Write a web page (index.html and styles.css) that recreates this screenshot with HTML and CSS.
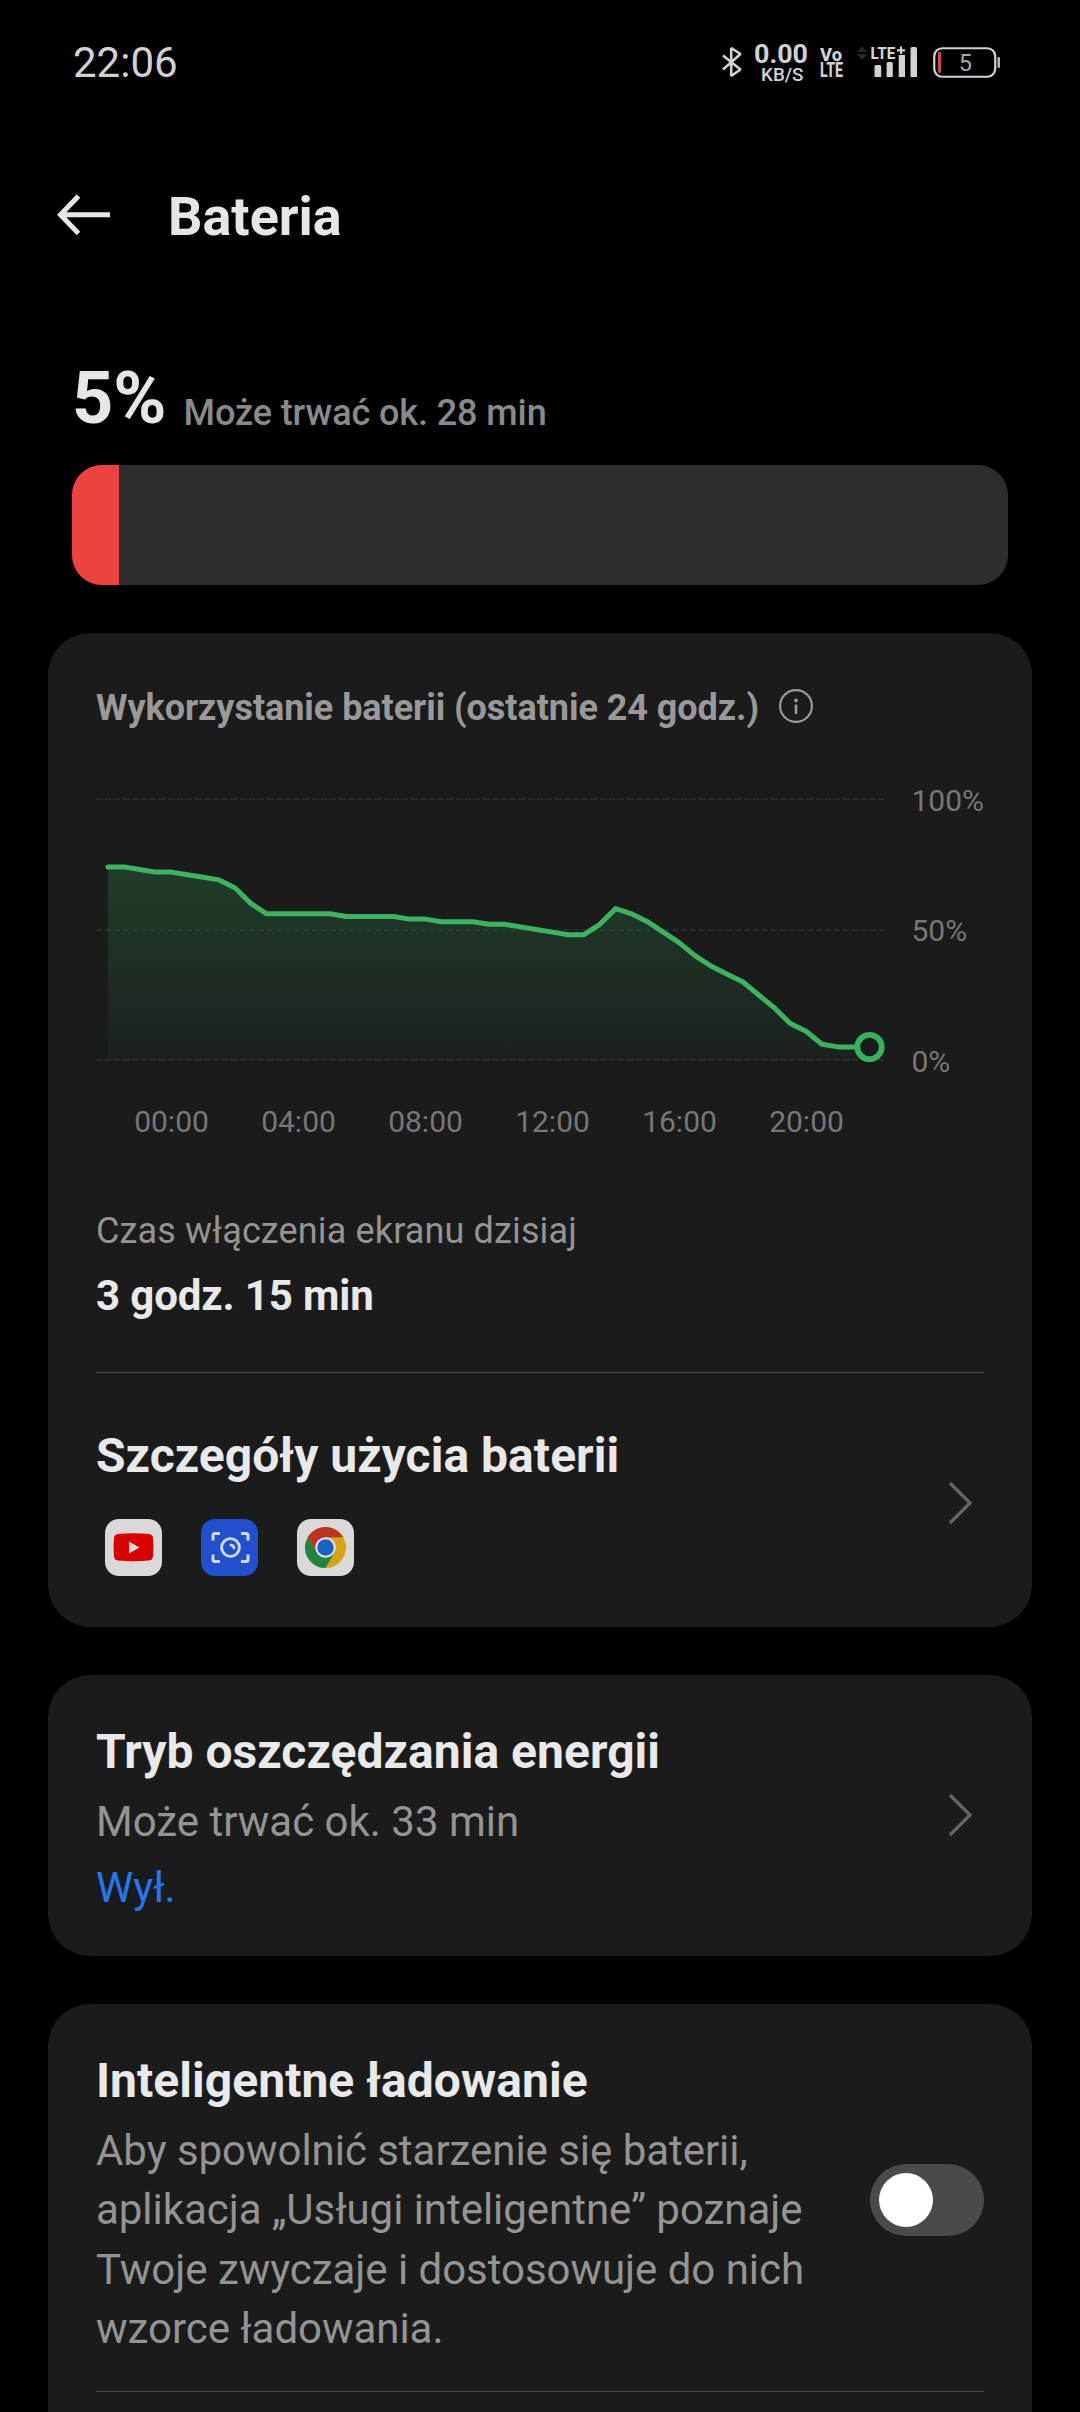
FILE: index.html
```html
<!DOCTYPE html>
<html lang="pl">
<head>
<meta charset="utf-8">
<title>Bateria</title>
<link rel="stylesheet" href="styles.css">
</head>
<body>
<div class="screen">
  <div class="status-bar">
    <span class="clock">22:06</span>
    <svg class="status-icons" width="284" height="50" viewBox="720 38 284 50">
      <path d="M723 55.500L740.500 69.500L731.200 76V48L740.500 54L723 69.500" fill="none" stroke="#d2d2d2" stroke-width="2.600" stroke-linejoin="bevel"/>
      <g fill="#d2d2d2" font-weight="700">
        <text x="754" y="63.300" font-size="25.500" textLength="54" lengthAdjust="spacingAndGlyphs">0.00</text>
        <text x="761" y="80.500" font-size="18.500" font-weight="500" textLength="42.500" lengthAdjust="spacingAndGlyphs">KB/S</text>
        <text x="820" y="61" font-size="19" font-weight="800" textLength="22" lengthAdjust="spacingAndGlyphs">Vo</text>
        <text x="820" y="76.700" font-size="20" font-weight="800" textLength="23" lengthAdjust="spacingAndGlyphs">LTE</text>
        <text x="870.500" y="58.500" font-size="16" font-weight="800" textLength="25" lengthAdjust="spacingAndGlyphs">LTE</text>
      </g>
      <path d="M857 52l5-6 5 6zM857 54l5 6 5-6z" fill="#292929"/>
      <path d="M897 50.300h8M901 46.500v7.600" stroke="#d2d2d2" stroke-width="2.200"/>
      <path d="M874.500 77v-10.500q0-1.500 1.500-1.500h3.700q1.500 0 1.500 1.500v10.500zM886.600 77v-13.500q0-1.500 1.500-1.500h3.200q1.500 0 1.500 1.500v13.500zM898.700 77v-22h6.300v22zM910.500 77v-28.500q0-1.500 1.500-1.500h3.500q1.500 0 1.500 1.500v28.500z" fill="#d2d2d2"/>
      <rect x="934.250" y="48.250" width="61" height="28.500" rx="8" fill="none" stroke="#d2d2d2" stroke-width="2.200"/>
      <rect x="997.500" y="57" width="2.500" height="11" rx="1.200" fill="#b8b8b8"/>
      <rect x="938" y="52" width="3" height="21" rx="1.200" fill="#d5434b"/>
      <text x="958.700" y="71" font-size="23.500" fill="#a8a8a8">5</text>
    </svg>
  </div>

  <div class="header">
    <svg class="back" width="54" height="44" viewBox="0 0 54 44" fill="none" stroke="#e6e6e6" stroke-width="5">
      <path d="M21.500 3L3.500 21.800L21.500 40.600M3.500 21.800H53"/>
    </svg>
    <h1 class="title">Bateria</h1>
  </div>

  <div class="summary">
    <span class="percent">5%</span>
    <span class="remaining">Może trwać ok. 28 min</span>
  </div>
  <div class="meter"><div class="meter-fill" style="width:5%"></div></div>

  <div class="card usage">
    <div class="usage-head">
      <h2 class="usage-title">Wykorzystanie baterii (ostatnie 24 godz.)</h2>
      <svg class="info" width="34" height="34" viewBox="0 0 34 34">
        <circle cx="17" cy="17" r="15.900" fill="none" stroke="#999" stroke-width="2.200"/>
        <circle cx="17" cy="11.500" r="2" fill="#999"/>
        <rect x="15.700" y="15.500" width="2.600" height="9.500" fill="#999"/>
      </svg>
    </div>
    <svg class="chart" width="888" height="370" viewBox="0 0 888 370">
      <defs>
        <linearGradient id="area" x1="0" y1="88" x2="0" y2="281" gradientUnits="userSpaceOnUse">
          <stop offset="0" stop-color="#34b35c" stop-opacity=".22"/>
          <stop offset="1" stop-color="#34b35c" stop-opacity=".04"/>
        </linearGradient>
      </defs>
      <g id="grid" stroke="#2a2a2a" stroke-width="2" stroke-dasharray="6 3">
        <path d="M0 20H788M0 151H788M0 281H788"/>
      </g>
      <path id="fill" fill="url(#area)"/>
      <path id="line" fill="none" stroke="#3bb45f" stroke-width="5" stroke-linejoin="round" stroke-linecap="round"/>
      <circle cx="773.500" cy="268" r="12.200" fill="#1b1b1b" stroke="#34b35c" stroke-width="5.800"/>
      <g class="axis">
        <text x="815.500" y="32">100%</text>
        <text x="815.500" y="162">50%</text>
        <text x="815.500" y="293">0%</text>
      </g>
      <g class="axis hours">
        <text x="75.500" y="352.500">00:00</text>
        <text x="202.500" y="352.500">04:00</text>
        <text x="329.500" y="352.500">08:00</text>
        <text x="456.500" y="352.500">12:00</text>
        <text x="583.500" y="352.500">16:00</text>
        <text x="710.500" y="352.500">20:00</text>
      </g>
    </svg>
    <p class="screen-label">Czas włączenia ekranu dzisiaj</p>
    <p class="screen-time">3 godz. 15 min</p>
    <div class="divider"></div>
    <div class="row details">
      <div>
        <h2 class="heading">Szczegóły użycia baterii</h2>
        <div class="apps">
          <svg width="57" height="57" viewBox="0 0 57 57">
            <rect width="57" height="57" rx="14" fill="#d9d9d9"/>
            <path d="M13 15Q28.500 13.500 44 15Q47.500 15.500 48 19Q49 28 48 37.500Q47.500 41 44 41.500Q28.500 43 13 41.500Q9.500 41 9 37.500Q8 28 9 19Q9.500 15.500 13 15Z" fill="#d90000"/>
            <path d="M24 22.500V34.500L34.500 28.500Z" fill="#e4dada"/>
          </svg>
          <svg width="57" height="57" viewBox="0 0 57 57">
            <rect width="57" height="57" rx="14" fill="#2150cf"/>
            <path d="M12 21.500V16.500Q12 14.500 14 14.500H19M40 14.500H45Q47 14.500 47 16.500V21.500M47 35.500V40.500Q47 42.500 45 42.500H40M19 42.500H14Q12 42.500 12 40.500V35.500" fill="none" stroke="#d3dcf6" stroke-width="3"/>
            <circle cx="29.500" cy="28.500" r="8.900" fill="none" stroke="#d3dcf6" stroke-width="2.800"/>
            <path d="M30 26Q32.500 26.500 33 29" fill="none" stroke="#d3dcf6" stroke-width="2.800" stroke-linecap="round"/>
          </svg>
          <svg width="57" height="57" viewBox="0 0 57 57">
            <rect width="57" height="57" rx="14" fill="#d9d9d9"/>
            <circle cx="28.500" cy="28.500" r="20.500" fill="#d7a414"/>
            <path d="M28.500 28.500V18.200H46.200A20.500 20.500 0 0 0 10.800 18.200L19.600 33.600Z" fill="#bf3025"/>
            <path d="M10.800 18.200A20.500 20.500 0 0 0 28.500 49L37.400 33.600L28.500 28.500L19.600 33.600Z" fill="#20853a"/>
            <circle cx="28.500" cy="28.500" r="10.300" fill="#dfe3e8"/>
            <circle cx="28.500" cy="28.500" r="8.200" fill="#1761c8"/>
          </svg>
        </div>
      </div>
      <svg class="chevron" width="26" height="44" viewBox="0 0 26 44"><path d="M2 2L22 22L2 42" fill="none" stroke="#636363" stroke-width="3.400"/></svg>
    </div>
  </div>

  <div class="card row saver">
    <div>
      <h2 class="heading">Tryb oszczędzania energii</h2>
      <p class="saver-text">Może trwać ok. 33 min</p>
      <p class="saver-state">Wył.</p>
    </div>
    <svg class="chevron" width="26" height="44" viewBox="0 0 26 44"><path d="M2 2L22 22L2 42" fill="none" stroke="#636363" stroke-width="3.400"/></svg>
  </div>

  <div class="card smart">
    <div class="row">
      <div class="smart-text">
        <h2 class="heading">Inteligentne ładowanie</h2>
        <p class="smart-body">Aby spowolnić starzenie się baterii, aplikacja „Usługi inteligentne” poznaje Twoje zwyczaje i dostosowuje do nich wzorce ładowania.</p>
      </div>
      <div class="toggle"><div class="knob"></div></div>
    </div>
    <div class="divider"></div>
  </div>
</div>
<script src="chart.js"></script>
</body>
</html>
```
FILE: styles.css
```css
* { box-sizing: border-box; }

body {
  margin: 0;
  background: #000;
  color: #e9e9e9;
  font-family: Roboto, "Liberation Sans", sans-serif;
}

h1, h2, p { margin: 0; }
svg { display: block; flex: none; }

.screen {
  display: flex;
  flex-direction: column;
  width: 1080px;
  height: 2412px;
  overflow: hidden;
}

.status-bar {
  display: flex;
  flex: none;
  align-items: center;
  justify-content: space-between;
  height: 125px;
  padding: 0 76px 0 73px;
}
.clock { font-size: 42px; color: #d2d2d2; }

.header {
  display: flex;
  flex: none;
  align-items: center;
  gap: 57px;
  height: 183px;
  padding-left: 57px;
}
.back { margin-top: -3px; }
.title { font-size: 54px; line-height: 64px; font-weight: 700; color: #e6e6e6; }

.summary {
  display: flex;
  flex: none;
  height: 157px;
  padding: 49px 72px 0;
  gap: 17px;
}
.percent { font-size: 72px; line-height: 84px; font-weight: 700; color: #e6e6e6; }
.remaining { margin-top: 35px; font-size: 36px; line-height: 42px; font-weight: 500; letter-spacing: -0.1px; color: #8a8a8a; }

.meter {
  flex: none;
  height: 120px;
  margin: 0 72px 48px;
  border-radius: 30px;
  background: #2d2d2d;
  overflow: hidden;
}
.meter-fill { height: 100%; background: #ee423e; }

.card {
  flex: none;
  margin: 0 48px 48px;
  padding: 48px;
  border-radius: 42px;
  background: #1b1b1b;
}

.row { display: flex; align-items: center; justify-content: space-between; }
.heading { padding-top: 1px; font-size: 48px; line-height: 56px; font-weight: 700; letter-spacing: 0.04px; }
.divider { height: 1px; background: #484848; }
.chevron { margin-right: 10.5px; }

.usage { height: 994px; padding-top: 54px; }
.usage-head { display: flex; gap: 20px; }
.usage-title { font-size: 36px; line-height: 42px; font-weight: 700; letter-spacing: -0.05px; color: #999; }
.info { margin-top: 2px; }
.chart { margin-top: 50px; }
.axis { font-size: 30px; fill: #777; }
.hours { text-anchor: middle; }
.screen-label { margin-top: 61px; font-size: 36px; line-height: 42px; letter-spacing: 0.14px; color: #949494; }
.screen-time { margin: 19px 0 51px; font-size: 42px; line-height: 50px; font-weight: 700; letter-spacing: -0.13px; }
.details { padding-top: 54px; }
.details .chevron { margin-top: 3px; }
.apps { display: flex; gap: 39px; margin: 35px 0 0 9px; }

.saver { height: 281px; padding-bottom: 43px; }
.saver .chevron { margin-top: -6px; }
.saver-text { margin: 17px 0 16px; font-size: 42px; line-height: 50px; color: #949494; }
.saver-state { font-size: 42px; line-height: 50px; color: #2078f2; }

.smart { height: 450px; margin-bottom: 0; }
.smart-text { width: 740px; }
.smart-body { margin: 12px 0 33px; font-size: 42px; line-height: 59.3px; letter-spacing: -0.04px; color: #949494; }
.toggle {
  width: 114px;
  height: 72px;
  margin-bottom: 43px;
  padding: 9px;
  border-radius: 36px;
  background: #4a4a4a;
}
.knob { width: 54px; height: 54px; border-radius: 50%; background: #fff; }
```
FILE: chart.js
```js
// Battery level in percent, one sample every half hour.
const levels = [
  74, 74, 73, 72, 72, 71, 70, 69, 66, 60, 56, 56, 56, 56, 56, 55, 55,
  55, 55, 54, 54, 53, 53, 53, 52, 52, 51, 50, 49, 48, 48, 52, 58, 56,
  53, 49, 45, 40, 36, 33, 30, 25, 20, 14, 11, 6, 5, 5, 5
];
const left = 12, step = 15.865, base = 281, unit = 2.61;
const points = levels.map((v, i) =>
  (left + i * step).toFixed(1) + " " + (base - v * unit).toFixed(1));
const d = "M" + points.join("L");
document.getElementById("line").setAttribute("d", d);
document.getElementById("fill").setAttribute("d", d + "V" + base + "H" + left + "Z");
```
